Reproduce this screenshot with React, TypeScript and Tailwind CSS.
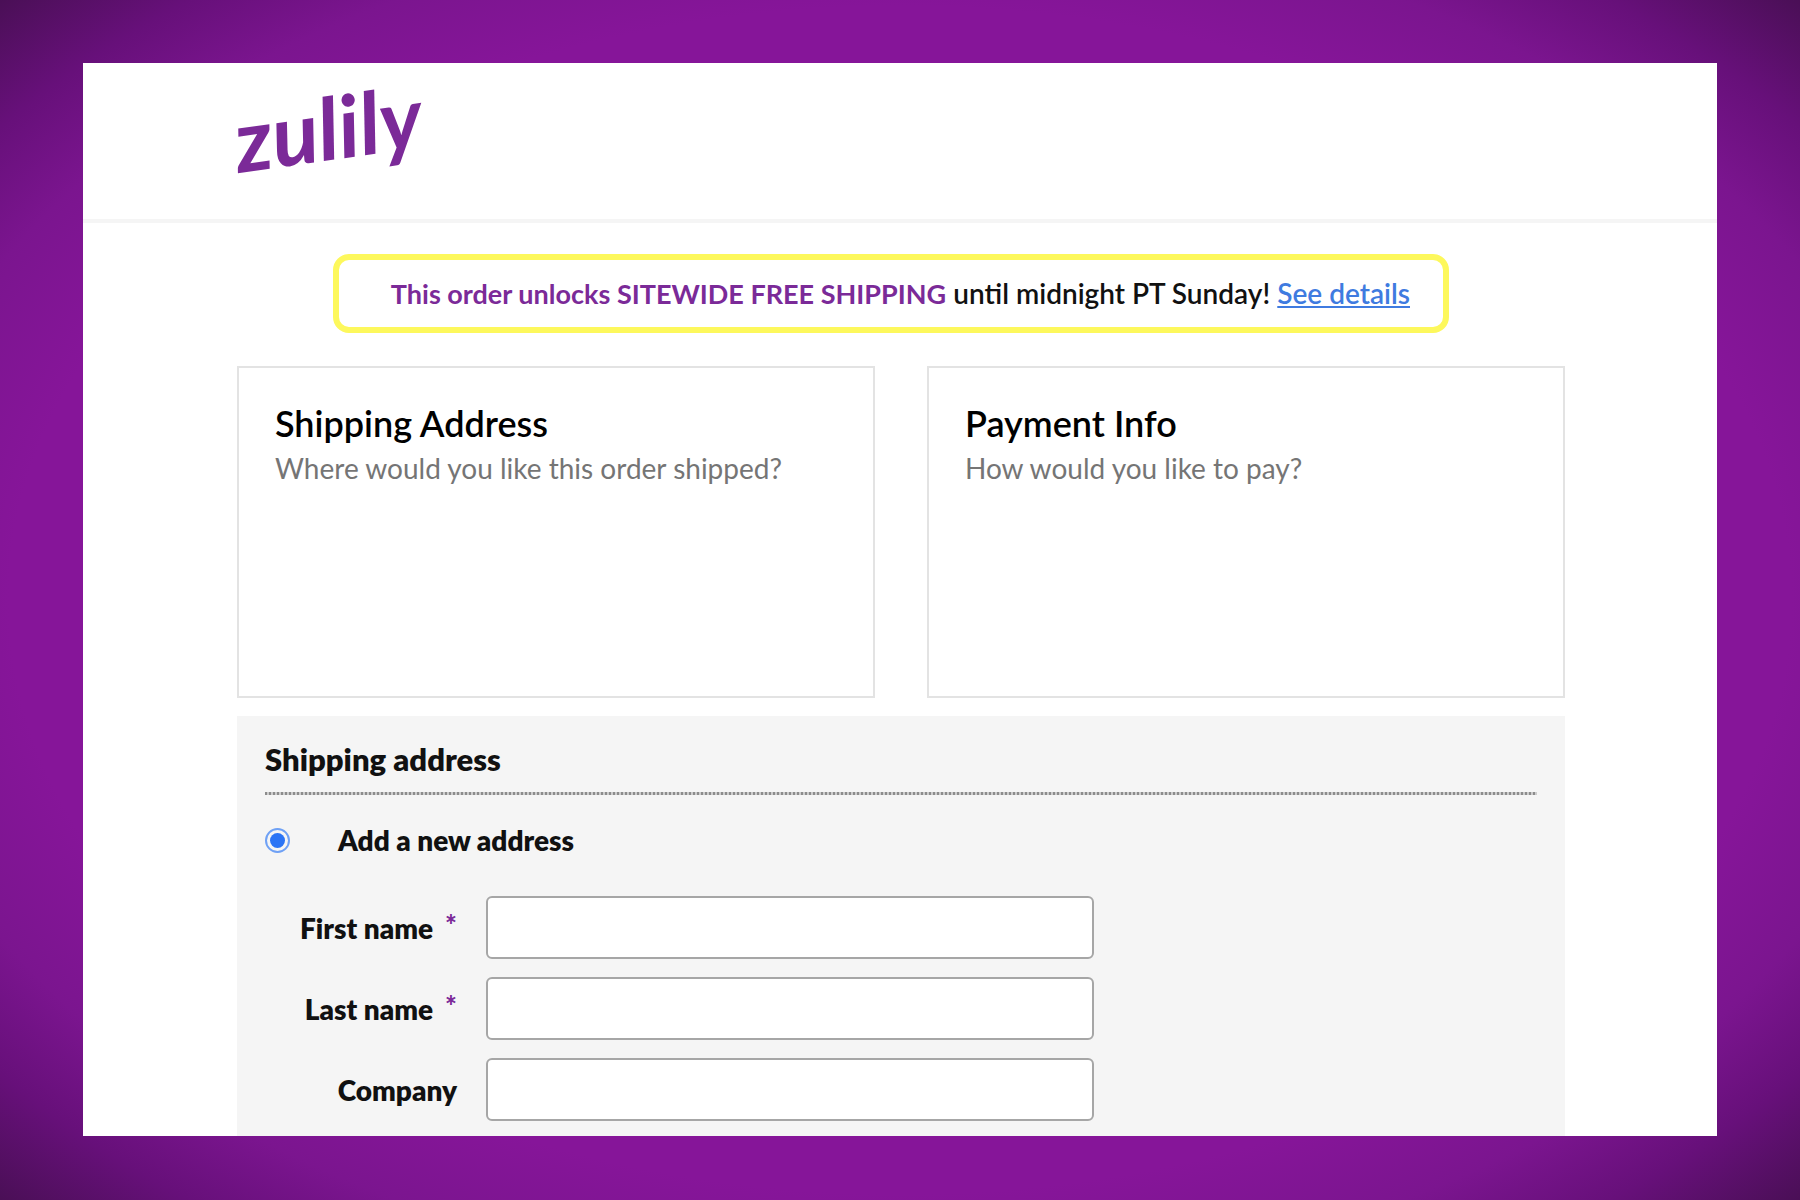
interface FieldProps {
  id: string
  label: string
  required?: boolean
}

interface StepCardProps {
  title: string
  hint: string
}

function Logo() {
  return (
    <svg
      className="h-[104px] w-[200px] overflow-visible"
      viewBox="0 0 200 104"
      role="img"
      aria-label="zulily"
    >
      <text
        x="2"
        y="90"
        transform="rotate(-8 2 90)"
        className="fill-[#7b2a98] font-['Lato',sans-serif] text-[86px] font-bold italic"
      >
        zulily
      </text>
    </svg>
  )
}

function StepCard({ title, hint }: StepCardProps) {
  return (
    <div className="h-[332px] border-2 border-[#e3e3e3] px-9 pt-8">
      <h2 className="text-[36px] leading-[46px] font-semibold text-black">{title}</h2>
      <p className="text-[28px] leading-[44px] text-[#757575]">{hint}</p>
    </div>
  )
}

function Field({ id, label, required }: FieldProps) {
  return (
    <div className="flex items-center">
      <label
        htmlFor={id}
        className="flex w-[192px] shrink-0 justify-end gap-3 text-[28px] leading-8 font-extrabold"
      >
        {label}
        {required && <span className="-mt-1 font-black text-[#7b2a98]">*</span>}
      </label>
      <input
        id={id}
        type="text"
        required={required}
        className="ml-[29px] h-[63px] w-[608px] rounded-md border-2 border-[#a6a6a6] bg-white px-4 text-[28px] outline-none"
      />
    </div>
  )
}

export default function App() {
  return (
    <div className="flex min-h-screen bg-[radial-gradient(ellipse_farthest-corner_at_center,#861599_70%,#7b158f_81%,#67107a_90%,#4a0f56_100%)] px-[83px] pt-[63px] pb-16 font-['Lato',sans-serif] text-[#111111]">
      <main className="flex w-full flex-col bg-white">
        <header className="border-b-4 border-[#f5f5f5] px-[154px] pt-5 pb-8">
          <a href="#" className="block w-[200px]">
            <Logo />
          </a>
        </header>

        <div className="flex flex-1 flex-col pt-[31px] pr-[152px] pl-[154px]">
          {/* promo banner */}
          <div className="mr-[116px] ml-24 rounded-2xl border-[6px] border-[#fdf85c] py-3 pr-[33px] text-right text-[28px] leading-[43px] whitespace-nowrap">
            <strong className="text-[27px] font-bold text-[#7b2a98]">
              This order unlocks SITEWIDE FREE SHIPPING
            </strong>{" "}
            <span className="font-semibold">until midnight PT Sunday!</span>{" "}
            <a href="#" className="font-semibold text-[#3f7be0] underline">
              See details
            </a>
          </div>

          <div className="mt-[33px] grid grid-cols-2 gap-[52px]">
            <StepCard title="Shipping Address" hint="Where would you like this order shipped?" />
            <StepCard title="Payment Info" hint="How would you like to pay?" />
          </div>

          {/* address form */}
          <form className="mt-[18px] flex-1 bg-[#f5f5f5] px-7 pt-[22px] pb-2">
            <h3 className="text-[31px] leading-[42px] font-extrabold">Shipping address</h3>
            <div className="mt-3 h-[3px] bg-[repeating-linear-gradient(90deg,#8c8c8c_0_2px,#cccccc_2px_4px)]" />
            <label className="mt-[25px] flex items-center gap-12 text-[28px] leading-10 font-extrabold">
              <input
                type="radio"
                name="address"
                defaultChecked
                className="size-[25px] appearance-none rounded-full border-2 border-[#6fa1f5] bg-[#2b74f5] bg-clip-content p-[3px]"
              />
              Add a new address
            </label>
            <div className="mt-9 flex flex-col gap-[18px]">
              <Field id="first-name" label="First name" required />
              <Field id="last-name" label="Last name" required />
              <Field id="company" label="Company" />
            </div>
          </form>
        </div>
      </main>
    </div>
  )
}
